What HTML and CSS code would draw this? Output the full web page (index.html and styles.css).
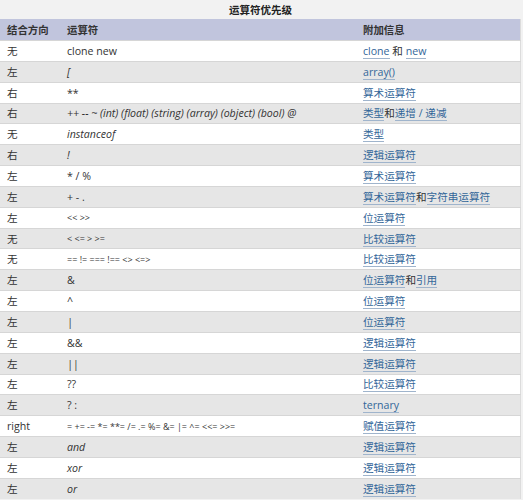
FILE: index.html
```html
<!DOCTYPE html>
<html lang="zh">
<head>
<meta charset="utf-8">
<link rel="stylesheet" href="styles.css">
</head>
<body>
<table class="prec">
<caption class="cap">运算符优先级</caption>
<thead>
<tr><th class="c1">结合方向</th><th class="c2">运算符</th><th class="c3">附加信息</th></tr>
</thead>
<tbody>
<tr><td>无</td><td>clone new</td><td><a href="#">clone</a> 和 <a href="#">new</a></td></tr>
<tr><td>左</td><td><i>[</i></td><td><a href="#">array()</a></td></tr>
<tr><td>右</td><td>**</td><td><a href="#">算术运算符</a></td></tr>
<tr><td>右</td><td><i>++ -- ~ (int) (float) (string) (array) (object) (bool) @</i></td><td><a href="#">类型</a>和<a href="#">递增 / 递减</a></td></tr>
<tr><td>无</td><td><i>instanceof</i></td><td><a href="#">类型</a></td></tr>
<tr><td>右</td><td><i>!</i></td><td><a href="#">逻辑运算符</a></td></tr>
<tr><td>左</td><td>* / %</td><td><a href="#">算术运算符</a></td></tr>
<tr><td>左</td><td>+ - .</td><td><a href="#">算术运算符</a>和<a href="#">字符串运算符</a></td></tr>
<tr><td>左</td><td><span class="sm">&lt;&lt; &gt;&gt;</span></td><td><a href="#">位运算符</a></td></tr>
<tr><td>无</td><td><span class="sm">&lt; &lt;= &gt; &gt;=</span></td><td><a href="#">比较运算符</a></td></tr>
<tr><td>无</td><td><span class="sm">== != === !== &lt;&gt; &lt;=&gt;</span></td><td><a href="#">比较运算符</a></td></tr>
<tr><td>左</td><td>&amp;</td><td><a href="#">位运算符</a>和<a href="#">引用</a></td></tr>
<tr><td>左</td><td>^</td><td><a href="#">位运算符</a></td></tr>
<tr><td>左</td><td><i>|</i></td><td><a href="#">位运算符</a></td></tr>
<tr><td>左</td><td>&amp;&amp;</td><td><a href="#">逻辑运算符</a></td></tr>
<tr><td>左</td><td><i>||</i></td><td><a href="#">逻辑运算符</a></td></tr>
<tr><td>左</td><td>??</td><td><a href="#">比较运算符</a></td></tr>
<tr><td>左</td><td>? :</td><td><a href="#">ternary</a></td></tr>
<tr><td>right</td><td><span class="sm">= += -= *= **= /= .= %= &amp;= |= ^= &lt;&lt;= &gt;&gt;=</span></td><td><a href="#">赋值运算符</a></td></tr>
<tr><td>左</td><td><i>and</i></td><td><a href="#">逻辑运算符</a></td></tr>
<tr><td>左</td><td><i>xor</i></td><td><a href="#">逻辑运算符</a></td></tr>
<tr><td>左</td><td><i>or</i></td><td><a href="#">逻辑运算符</a></td></tr>
</tbody>
</table>
</body>
</html>
```
FILE: styles.css
```css
html, body {
  margin: 0;
  padding: 0;
  background: #f2f2f2;
}
body {
  font-family: "Open Sans", "Noto Sans CJK SC", sans-serif;
  font-size: 10.6px;
  color: #333;
}
.prec {
  width: 521px;
  border-collapse: collapse;
  border-right: 1px solid #dcdcdc;
}
.cap {
  height: 19px;
  line-height: 20px;
  font-weight: bold;
  font-size: 10.5px;
  color: #222;
  text-align: center;
  font-family: "Noto Sans CJK SC", sans-serif;
}
.prec th {
  background: #c1c5dd;
  height: 21px;
  padding: 0 7px;
  text-align: left;
  font-weight: bold;
  font-family: "Noto Sans CJK SC", sans-serif;
  font-size: 10.4px;
  color: #333;
}
.c1 { width: 46px; }
.c2 { width: 282px; }
.prec td {
  height: 19.85px;
  padding: 0 7px;
  border-top: 1px solid #d6d6d6;
  white-space: nowrap;
  line-height: 14px;
}
.prec tbody tr:nth-child(odd) td { background: #ffffff; }
.prec tbody tr:nth-child(even) td { background: #e6e6e6; }
.sm { font-size: 9px; }
a {
  color: #336699;
  text-decoration: none;
  border-bottom: 1px solid #9fb4cc;
}
i { font-style: italic; }
```
